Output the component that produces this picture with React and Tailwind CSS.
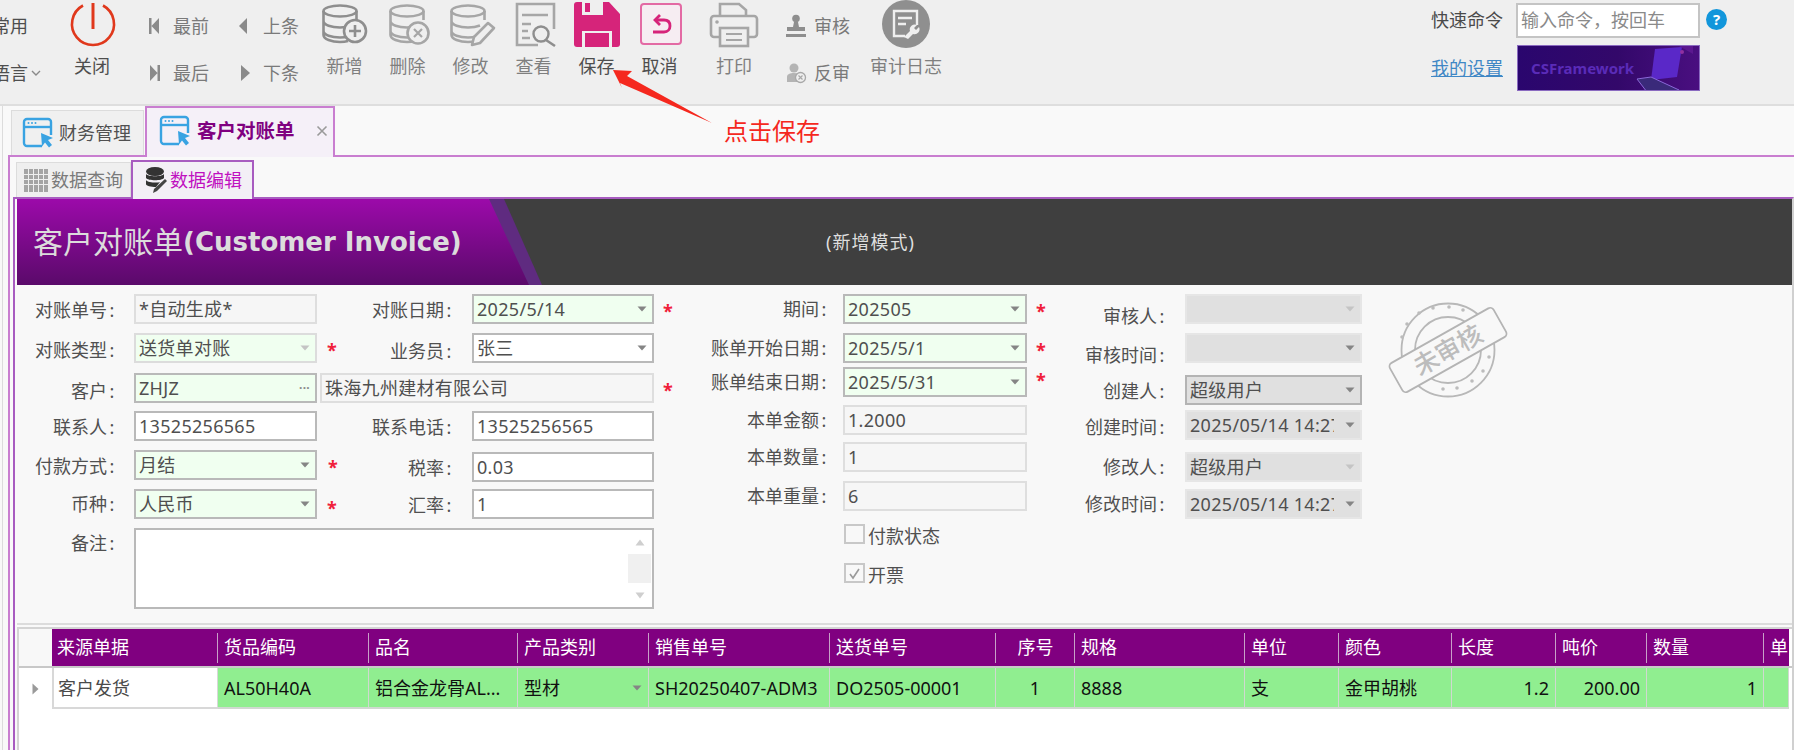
import React from "react";

const GRAY = "#8e8e8e";
const LIGHT = "#a6a6a6";

function Tri({ light }) {
  return (
    <svg width="10" height="6" viewBox="0 0 10 6" className="shrink-0">
      <path d="M0.5 0.5h9L5 5.5z" fill={light ? "#c4c4c4" : "#858585"} />
    </svg>
  );
}

const boxStyles = {
  req: "bg-[#f0fff0] border-[#b9b9b9]",
  reqLight: "bg-[#f0fff0] border-[#dcdcdc]",
  plain: "bg-white border-[#b9b9b9]",
  read: "bg-[#f6f6f6] border-[#dedede]",
  dis: "bg-[#e0e0e0] border-[#e6e6e6]",
  disDark: "bg-[#e0e0e0] border-[#b4b4b4]",
};

function Box({ kind = "plain", w = "w-[183px]", h = "h-[30px]", arrow, light, dots, extra = "", children }) {
  return (
    <div className={`flex items-center gap-[11px] border-2 pl-[3px] pr-[5px] text-[18px] leading-[26px] tracking-[0.3px] text-[#4f4f4f] overflow-hidden whitespace-nowrap shrink-0 ${boxStyles[kind]} ${w} ${h} ${extra}`}>
      <span className="flex-1 overflow-hidden">{children}</span>
      {arrow && <Tri light={light} />}
      {dots && <span className="text-[#8a8a8a] text-[12px] leading-none font-bold">···</span>}
    </div>
  );
}

function Star({ extra = "" }) {
  return <span className={`inline-block w-[9px] text-center text-[#f0203a] text-[18px] leading-none font-bold shrink-0 ${extra}`}>*</span>;
}

function Label({ w, pr = "pr-[19px]", pt = "pt-[2px]", children }) {
  return (
    <div className={`flex items-center justify-end text-right text-[18px] leading-[26px] text-[#505050] h-[30px] shrink-0 whitespace-nowrap ${w} ${pr} ${pt}`}>
      <span>{children}</span>
      <span className="inline-block w-[10px] text-center -mr-[2px]">:</span>
    </div>
  );
}

function ToolBtn({ label, dark, children, w = "w-[63px]" }) {
  return (
    <div className={`flex flex-col items-center shrink-0 ${w}`}>
      <div className="h-[54px]">{children}</div>
      <div className={`text-[18px] leading-[24px] whitespace-nowrap ${dark ? "text-[#4e4e4e]" : "text-[#7f7f7f]"}`}>{label}</div>
    </div>
  );
}

function Db({ c, x }) {
  return (
    <g fill="none" stroke={c} strokeWidth="2.6">
      <ellipse cx={x + 17} cy="11" rx="16.5" ry="5.5" />
      <path d={`M${x + 0.5} 11v24c0 4 8 7 16.5 7 3 0 6-.4 8-1M${x + 33.5} 11v9M${x + 0.5} 21c0 4 8 6.5 16.5 6.5 5 0 9-.8 12-2M${x + 0.5} 31c0 4 8 6.5 16.5 6.5 3 0 6-.3 8-1`} />
    </g>
  );
}

function Tri2({ dir }) {
  return (
    <svg width="12" height="18" viewBox="0 0 12 18" className="shrink-0">
      {dir === "first" && <path d="M1 1h2.5v16H1zM11 1v16L3.5 9z" fill="#8a8a8a" />}
      {dir === "prev" && <path d="M9 1v16L1 9z" fill="#8a8a8a" />}
      {dir === "last" && <path d="M8.5 1h2.5v16H8.5zM1 1v16L8.5 9z" fill="#8a8a8a" />}
      {dir === "next" && <path d="M2 1v16L11 9z" fill="#8a8a8a" />}
    </svg>
  );
}

function NavCell({ dir, w, gap, children }) {
  return (
    <div className={`flex items-center h-[24px] text-[18px] leading-[24px] text-[#7a7a7a] ${w} ${gap}`}>
      <Tri2 dir={dir} />
      <span>{children}</span>
    </div>
  );
}

function WinIcon() {
  return (
    <svg width="32" height="32" viewBox="0 0 32 32" className="shrink-0">
      <g fill="none" stroke="#39a3e2" strokeWidth="2.4">
        <path d="M20 29H5a3 3 0 0 1-3-3V5a3 3 0 0 1 3-3h21a3 3 0 0 1 3 3v13" />
        <path d="M2 10h27" />
      </g>
      <g fill="#39a3e2">
        <circle cx="6.5" cy="6" r="1" />
        <circle cx="10" cy="6" r="1" />
        <circle cx="13.5" cy="6" r="1" />
        <path d="M19 16l12 5-5 2 4 5-3 2.5-4-5-3 4z" />
      </g>
    </svg>
  );
}

const cols = [
  { w: "w-[166px]", h: "来源单据", c: "客户发货", white: true },
  { w: "w-[151px]", h: "货品编码", c: "AL50H40A" },
  { w: "w-[149px]", h: "品名", c: "铝合金龙骨AL..." },
  { w: "w-[131px]", h: "产品类别", c: "型材", arrow: true },
  { w: "w-[181px]", h: "销售单号", c: "SH20250407-ADM3" },
  { w: "w-[166px]", h: "送货单号", c: "DO2505-00001" },
  { w: "w-[79px]", h: "序号", c: "1", center: true },
  { w: "w-[170px]", h: "规格", c: "8888" },
  { w: "w-[94px]", h: "单位", c: "支" },
  { w: "w-[113px]", h: "颜色", c: "金甲胡桃" },
  { w: "w-[104px]", h: "长度", c: "1.2", right: true },
  { w: "w-[91px]", h: "吨价", c: "200.00", right: true },
  { w: "w-[117px]", h: "数量", c: "1", right: true },
  { w: "w-[25px]", h: "单", c: "" },
];

function Check({ checked, label, extra = "" }) {
  return (
    <div className={`flex items-center gap-[3px] h-[20px] text-[18px] text-[#505050] ${extra}`}>
      <span className="w-[21px] h-[20px] border-2 border-[#c8c8c8] bg-[#f8f8f8] flex items-center justify-center">
        {checked && (
          <svg width="13" height="13" viewBox="0 0 13 13">
            <path d="M2 7l3 4 6-9" fill="none" stroke="#9a9a9a" strokeWidth="1.6" />
          </svg>
        )}
      </span>
      <span className="pt-[4px]">{label}</span>
    </div>
  );
}

export default function App() {
  return (
    <div className="relative w-[1794px] h-[750px] overflow-hidden flex flex-col bg-[#f9f9f9] font-['Noto_Sans','Noto_Sans_CJK_SC',sans-serif]">
      {/* Toolbar */}
      <div className="h-[106px] shrink-0 flex bg-[#efefef] border-b-2 border-[#dedede] overflow-hidden">
        <div className="w-[67px] shrink-0 -ml-[8px] mr-[8px] pt-[14px] text-[18px] leading-[24px] text-[#4e4e4e] whitespace-nowrap">
          <div>常用</div>
          <div className="mt-[23px] flex items-center gap-[3px]">
            语言
            <svg width="10" height="7" viewBox="0 0 10 7"><path d="M1 1l4 4 4-4" fill="none" stroke="#8a8a8a" strokeWidth="1.4" /></svg>
          </div>
        </div>
        <ToolBtn label="关闭" dark w="w-[50px]">
          <svg width="50" height="48" viewBox="0 0 50 48">
            <path d="M16 5.500a21 21 0 1 0 20 0" fill="none" stroke="#e0381c" strokeWidth="2.6" />
            <path d="M26 3v26" stroke="#e0381c" strokeWidth="3" />
          </svg>
        </ToolBtn>
        <div className="w-[167px] shrink-0 ml-[29px] pt-[14px] flex flex-wrap content-start gap-y-[23px]">
          <NavCell dir="first" w="w-[90px] pl-[2px]" gap="gap-[13px]">最前</NavCell>
          <NavCell dir="prev" w="w-[77px] pl-[2px]" gap="gap-[13px]">上条</NavCell>
          <NavCell dir="last" w="w-[90px] pl-[3px]" gap="gap-[12px]">最后</NavCell>
          <NavCell dir="next" w="w-[77px] pl-[3px]" gap="gap-[12px]">下条</NavCell>
        </div>
        <ToolBtn label="新增">
          <svg width="63" height="48" viewBox="0 0 63 48">
            <Db c={GRAY} x={10} />
            <circle cx="42" cy="31" r="11" fill="#efefef" stroke={GRAY} strokeWidth="2.6" />
            <path d="M42 25v12M36 31h12" stroke={GRAY} strokeWidth="2.6" />
          </svg>
        </ToolBtn>
        <ToolBtn label="删除">
          <svg width="63" height="48" viewBox="0 0 63 48">
            <Db c={LIGHT} x={14} />
            <circle cx="42" cy="33" r="10.500" fill="#efefef" stroke={LIGHT} strokeWidth="2.6" />
            <path d="M38 29l8 8M46 29l-8 8" stroke={LIGHT} strokeWidth="2.2" />
          </svg>
        </ToolBtn>
        <ToolBtn label="修改">
          <svg width="63" height="48" viewBox="0 0 63 48">
            <Db c={LIGHT} x={12} />
            <path d="M49 23l6 5-14 15-8 2 2-8z" fill="#efefef" stroke={LIGHT} strokeWidth="2.6" strokeLinejoin="round" />
          </svg>
        </ToolBtn>
        <ToolBtn label="查看">
          <svg width="63" height="48" viewBox="0 0 63 48">
            <path d="M36 45H15V4h37v25" fill="none" stroke={LIGHT} strokeWidth="2.6" />
            <path d="M20 15h26M20 24h9M20 31h6M20 38h8" stroke={LIGHT} strokeWidth="2.4" />
            <circle cx="39" cy="34" r="7.500" fill="none" stroke={GRAY} strokeWidth="2.4" />
            <path d="M44 40l9 6" stroke={GRAY} strokeWidth="2.6" />
          </svg>
        </ToolBtn>
        <ToolBtn label="保存" dark>
          <svg width="63" height="48" viewBox="0 0 63 48">
            <path d="M12 2h32l11 12v30a3 3 0 0 1-3 3H12a3 3 0 0 1-3-3V5a3 3 0 0 1 3-3z" fill="#d6247a" />
            <rect x="17" y="2" width="21" height="13" fill="#efefef" />
            <rect x="20" y="3" width="5" height="9" fill="#d6247a" />
            <rect x="17" y="31" width="30" height="16" fill="#efefef" />
            <rect x="20" y="33" width="24" height="14" fill="#d6247a" />
          </svg>
        </ToolBtn>
        <ToolBtn label="取消" dark>
          <svg width="63" height="48" viewBox="0 0 63 48">
            <rect x="13" y="4" width="40" height="40" rx="3" fill="#f6edf2" stroke="#e36aa4" strokeWidth="2" />
            <path d="M32 15l-5 5 5 5" fill="none" stroke="#d6247a" strokeWidth="2.8" />
            <path d="M27 20h9c5 0 6 3 6 6s-2 6-6 6H25" fill="none" stroke="#d6247a" strokeWidth="2.8" />
          </svg>
        </ToolBtn>
        <ToolBtn label="打印" w="w-[86px]">
          <svg width="86" height="48" viewBox="0 0 86 48">
            <path d="M29 15V4h19l7 6v5" fill="none" stroke={LIGHT} strokeWidth="2.6" />
            <path d="M29 37h-6a3 3 0 0 1-3-3V19a3 3 0 0 1 3-3h40a3 3 0 0 1 3 3v15a3 3 0 0 1-3 3h-6" fill="none" stroke={LIGHT} strokeWidth="2.6" />
            <rect x="29" y="28" width="28" height="18" fill="none" stroke={LIGHT} strokeWidth="2.6" />
            <path d="M35 34h16M35 40h16" stroke={LIGHT} strokeWidth="2.2" />
            <circle cx="26" cy="22" r="1.800" fill={LIGHT} />
          </svg>
        </ToolBtn>
        <div className="w-[83px] shrink-0 pl-[8px] pt-[14px] flex flex-col gap-[23px] text-[18px] leading-[24px] text-[#7a7a7a]">
          <div className="flex items-center gap-[7px] h-[24px]">
            <svg width="22" height="24" viewBox="0 0 22 24" className="shrink-0">
              <circle cx="11" cy="4.500" r="3.800" fill="#8e8e8e" />
              <path d="M9 8h4l1 5h6v4H2v-4h6z M1 20h20v3H1z" fill="#8e8e8e" />
            </svg>
            审核
          </div>
          <div className="flex items-center gap-[7px] h-[24px]">
            <svg width="22" height="22" viewBox="0 0 22 22" className="shrink-0">
              <circle cx="9" cy="6" r="4.500" fill="#b4b4b4" />
              <path d="M2 20v-5c0-3 3-4 7-4s6 1 6 3v6z" fill="#b4b4b4" />
              <circle cx="15.500" cy="15.500" r="5" fill="#efefef" stroke="#a8a8a8" strokeWidth="1.300" />
              <path d="M13.500 13.500l4 4M17.500 13.500l-4 4" stroke="#a8a8a8" strokeWidth="1.200" />
            </svg>
            反审
          </div>
        </div>
        <ToolBtn label="审计日志" w="w-[92px]">
          <svg width="92" height="48" viewBox="0 0 92 48">
            <circle cx="46" cy="24" r="24" fill="#8f8f8f" />
            <path d="M45 36H34V11h23v14" fill="none" stroke="#efefef" strokeWidth="2.4" />
            <path d="M38 18h14M38 24h8" stroke="#efefef" strokeWidth="2.4" />
            <path d="M44 37l6-6a5 5 0 0 1 7-6l-3 3 2 2 3-3a5 5 0 0 1-6 7l-5 5z" fill="#efefef" />
          </svg>
        </ToolBtn>
        <div className="ml-[479px] w-[300px] shrink-0 flex flex-col">
          <div className="flex items-center h-[45px] pb-[4px]">
            <span className="w-[85px] text-[18px] text-[#4a4a4a]">快速命令</span>
            <div className="w-[184px] h-[35px] border-2 border-[#c4c4c4] bg-white pl-[3px] text-[18px] leading-[31px] text-[#8a8a8a] whitespace-nowrap">输入命令，按回车</div>
            <span className="ml-[6px] w-[21px] h-[21px] mb-[3px] rounded-full bg-[#1296db] text-white text-[15px] font-bold leading-[21px] text-center">?</span>
          </div>
          <div className="flex items-center">
            <span className="w-[86px] text-[18px] text-[#3f87c5] underline">我的设置</span>
            <div className="relative w-[183px] h-[46px] overflow-hidden flex items-center pl-[13px] bg-[linear-gradient(90deg,#2a066e,#33086a_55%,#4a0f80)] border border-[#8a6ac0] text-[#5a2bb8] text-[15px] font-bold">
              <span className="relative z-10">CSFramework</span>
              <svg width="60" height="46" viewBox="0 0 60 46" className="absolute right-[6px] top-0">
                <path d="M22 3l27-2-5 30-26 3z" fill="#5a28c8" />
                <path d="M4 33l14-2 28 13-4 2H14z" fill="#3a2a7a" stroke="#8a68d8" strokeWidth="1" />
                <path d="M46 0h14v8z" fill="#5c1890" />
                <circle cx="49" cy="6" r="2" fill="#9030a0" />
              </svg>
            </div>
          </div>
        </div>
      </div>

      {/* Tabbed body */}
      <div className="flex-1 min-h-0 ml-[2px] border-l border-[#dcdcdc] flex flex-col">
        <div className="h-[49px] shrink-0 pl-[8px] flex items-end gap-[1px]">
          <div className="w-[133px] h-[45px] border border-[#dcdcdc] border-b-0 bg-[#f0f0f0] flex items-center pl-[10px] gap-[5px] text-[18px] text-[#505050]">
            <WinIcon />
            <span className="whitespace-nowrap">财务管理</span>
          </div>
          <div className="relative z-10 -mb-[2px] w-[190px] h-[51px] border-2 border-b-0 border-[#c97ed0] bg-[#f5f0f8] flex items-center pl-[12px] pb-[4px] gap-[6px]">
            <WinIcon />
            <span className="text-[19.5px] font-bold text-[#800080] whitespace-nowrap">客户对账单</span>
            <svg width="12" height="12" viewBox="0 0 12 12" className="ml-[15px]"><path d="M1.500 1.500l9 9M10.500 1.500l-9 9" stroke="#9a9a9a" strokeWidth="1.600" /></svg>
          </div>
        </div>

        <div className="ml-[5px] flex-1 min-h-0 border-t-2 border-l-2 border-[#c97ed0] flex flex-col">
          <div className="h-[40px] shrink-0 pl-[6px] flex items-end">
            <div className="w-[115px] h-[35px] border border-[#dcdcdc] border-b-0 bg-[#efefef] flex items-center pl-[7px] gap-[3px] text-[18px] text-[#7a7a7a] whitespace-nowrap">
              <svg width="24" height="23" viewBox="0 0 24 23" className="shrink-0">
                <rect width="24" height="23" fill="#a4a4a4" />
                <path d="M4.500 0v23M9.500 0v23M14.500 0v23M19.500 0v23M0 5.500h24M0 10.500h24M0 15.500h24" stroke="#efefef" strokeWidth="1" />
              </svg>
              数据查询
            </div>
            <div className="relative z-10 -mb-[2px] w-[123px] h-[39px] border-2 border-b-0 border-[#a85cc0] bg-[#f3eff6] flex items-center pl-[12px] gap-[3px] text-[18px] text-[#c010c0] whitespace-nowrap">
              <svg width="22" height="27" viewBox="0 0 22 27" className="shrink-0">
                <ellipse cx="10" cy="4.500" rx="9" ry="4.500" fill="#333" />
                <path d="M1 7c2 3 16 3 18 0v4c-2 3-16 3-18 0zM1 13c2 3 12 3 14 2l-4 5c-5 0-10-1-10-3z" fill="#333" />
                <path d="M20 12l2 2-10 10-4 2 1-4z" fill="#444" />
              </svg>
              数据编辑
            </div>
          </div>

          <div className="ml-[3px] flex-1 min-h-0 border-t-2 border-l-2 border-r-2 border-t-[#a85cc0] border-l-[#a85cc0] border-r-[#d0d0d0] pl-[2px] flex flex-col">
            {/* Banner */}
            <div className="relative h-[86px] shrink-0 bg-[#3f3f3f] flex items-center overflow-hidden">
              <div className="absolute inset-y-0 left-0 w-[525px] bg-[#5f2b80] [clip-path:polygon(0_0,487px_0,525px_100%,0_100%)]"></div>
              <div className="absolute inset-y-0 left-0 w-[512px] bg-[linear-gradient(180deg,#9c0aaa,#5a0a6a)] [clip-path:polygon(0_0,472px_0,512px_100%,0_100%)]"></div>
              <div className="relative w-[809px] shrink-0 pl-[16px] text-[#dcdcdc] whitespace-nowrap flex items-center">
                <span className="text-[30px] leading-[40px]">客户对账单</span>
                <span className="text-[26px] leading-[40px] font-bold font-['DejaVu_Sans',sans-serif]">(Customer Invoice)</span>
              </div>
              <span className="relative text-[18px] tracking-[1px] text-[#dedede] whitespace-nowrap">(新增模式)</span>
            </div>

            {/* Form */}
            <div className="relative h-[340px] shrink-0 bg-[#f8f8f8] border-b-2 border-[#dcdcdc] pt-[9px] flex items-start">
              <div className="w-[673px] shrink-0 flex flex-col">
                <div className="flex items-start">
                  <Label w="w-[117px]">对账单号</Label>
                  <Box kind="read">*自动生成*</Box>
                  <Label w="w-[155px]" pr="pr-[20px]">对账日期</Label>
                  <Box kind="req" w="w-[182px]" arrow>2025/5/14</Box>
                  <Star extra="ml-[9px] mt-[8px]" />
                </div>
                <div className="flex items-start mt-[9px]">
                  <Label w="w-[117px]" pt="pt-[4px]">对账类型</Label>
                  <Box kind="reqLight" arrow light>送货单对账</Box>
                  <Star extra="ml-[10px] mt-[8px]" />
                  <Label w="w-[136px]" pr="pr-[20px]" pt="pt-[6px]">业务员</Label>
                  <Box w="w-[182px]" arrow>张三</Box>
                </div>
                <div className="flex items-start mt-[10px]">
                  <Label w="w-[117px]" pt="pt-[5px]">客户</Label>
                  <Box kind="req" dots>ZHJZ</Box>
                  <Box kind="read" w="w-[334px]" extra="ml-[3px] bg-[#f0f0f0]">珠海九州建材有限公司</Box>
                  <Star extra="ml-[9px] mt-[8px]" />
                </div>
                <div className="flex items-start mt-[8px]">
                  <Label w="w-[117px]">联系人</Label>
                  <Box>13525256565</Box>
                  <Label w="w-[155px]" pr="pr-[20px]">联系电话</Label>
                  <Box w="w-[182px]">13525256565</Box>
                </div>
                <div className="flex items-start mt-[9px]">
                  <Label w="w-[117px]">付款方式</Label>
                  <Box kind="req" arrow>月结</Box>
                  <Star extra="ml-[11px] mt-[8px]" />
                  <div className="mt-[2px] flex items-start">
                    <Label w="w-[135px]" pr="pr-[20px]">税率</Label>
                    <Box w="w-[182px]">0.03</Box>
                  </div>
                </div>
                <div className="flex items-start mt-[7px]">
                  <Label w="w-[117px]" pt="pt-0">币种</Label>
                  <Box kind="req" arrow>人民币</Box>
                  <Star extra="ml-[10px] mt-[10px]" />
                  <Label w="w-[136px]" pr="pr-[20px]">汇率</Label>
                  <Box w="w-[182px]">1</Box>
                </div>
                <div className="flex items-start mt-[9px]">
                  <Label w="w-[117px]" pt="pt-0">备注</Label>
                  <div className="relative w-[520px] h-[81px] border-2 border-[#b9b9b9] bg-white flex justify-end">
                    <div className="w-[23px] h-full bg-[#f0f0f0] flex flex-col justify-between mr-[1px]">
                      <div className="h-[24px] bg-white flex items-center justify-center">
                        <svg width="10" height="7" viewBox="0 0 10 7"><path d="M5 .5l4.500 6h-9z" fill="#cfcfcf" /></svg>
                      </div>
                      <div className="h-[24px] bg-white flex items-center justify-center">
                        <svg width="10" height="7" viewBox="0 0 10 7"><path d="M5 6.500l4.500-6h-9z" fill="#cfcfcf" /></svg>
                      </div>
                    </div>
                  </div>
                </div>
              </div>

              <div className="w-[380px] shrink-0 flex flex-col">
                <div className="flex items-start">
                  <Label w="w-[153px]" pr="pr-[16px]" pt="pt-0">期间</Label>
                  <Box kind="req" w="w-[184px]" arrow>202505</Box>
                  <Star extra="ml-[9px] mt-[8px]" />
                </div>
                <div className="flex items-start mt-[9px]">
                  <Label w="w-[153px]" pr="pr-[16px]" pt="pt-0">账单开始日期</Label>
                  <Box kind="req" w="w-[184px]" arrow>2025/5/1</Box>
                  <Star extra="ml-[9px] mt-[8px]" />
                </div>
                <div className="flex items-start mt-[4px]">
                  <Label w="w-[153px]" pr="pr-[16px]" pt="pt-0">账单结束日期</Label>
                  <Box kind="req" w="w-[184px]" arrow>2025/5/31</Box>
                  <Star extra="ml-[9px] mt-[4px]" />
                </div>
                <div className="flex items-start mt-[8px]">
                  <Label w="w-[153px]" pr="pr-[16px]" pt="pt-0">本单金额</Label>
                  <Box kind="read" w="w-[184px]">1.2000</Box>
                </div>
                <div className="flex items-start mt-[7px]">
                  <Label w="w-[153px]" pr="pr-[16px]" pt="pt-0">本单数量</Label>
                  <Box kind="read" w="w-[184px]">1</Box>
                </div>
                <div className="flex items-start mt-[9px]">
                  <Label w="w-[153px]" pr="pr-[16px]" pt="pt-0">本单重量</Label>
                  <Box kind="read" w="w-[184px]">6</Box>
                </div>
                <Check label="付款状态" extra="ml-[154px] mt-[13px]" />
                <Check checked label="开票" extra="ml-[154px] mt-[19px]" />
              </div>

              <div className="flex-1 flex flex-col">
                <div className="flex items-start">
                  <Label w="w-[115px]" pr="pr-[20px]" pt="pt-[13px]">审核人</Label>
                  <Box kind="dis" w="w-[177px]" arrow light></Box>
                </div>
                <div className="flex items-start mt-[9px]">
                  <Label w="w-[115px]" pr="pr-[20px]" pt="pt-[13px]">审核时间</Label>
                  <Box kind="dis" w="w-[177px]" arrow></Box>
                </div>
                <div className="flex items-start mt-[12px]">
                  <Label w="w-[115px]" pr="pr-[20px]">创建人</Label>
                  <Box kind="disDark" w="w-[177px]" arrow>超级用户</Box>
                </div>
                <div className="flex items-start mt-[5px]">
                  <Label w="w-[115px]" pr="pr-[20px]" pt="pt-[4px]">创建时间</Label>
                  <Box kind="dis" w="w-[177px]" arrow>2025/05/14 14:27</Box>
                </div>
                <div className="flex items-start mt-[12px]">
                  <Label w="w-[115px]" pr="pr-[20px]" pt="pt-0">修改人</Label>
                  <Box kind="dis" w="w-[177px]" arrow light>超级用户</Box>
                </div>
                <div className="flex items-start mt-[7px]">
                  <Label w="w-[115px]" pr="pr-[20px]" pt="pt-0">修改时间</Label>
                  <Box kind="dis" w="w-[177px]" arrow>2025/05/14 14:27</Box>
                </div>
              </div>

              {/* Stamp */}
              <svg width="130" height="100" viewBox="0 0 130 100" className="absolute left-[1366px] top-[15px]">
                <g fill="none" stroke="#b8b8b8">
                  <circle cx="65" cy="50" r="46.500" strokeWidth="1.800" />
                  <circle cx="65" cy="50" r="33" strokeWidth="1.800" />
                </g>
                <g fill="#bcbcbc">
                  <circle cx="36" cy="13" r="1.800" /><circle cx="50" cy="8" r="1.800" /><circle cx="66" cy="7" r="1.800" /><circle cx="80" cy="10" r="1.800" /><circle cx="24" cy="24" r="1.800" /><circle cx="19" cy="37" r="1.800" />
                  <circle cx="106" cy="57" r="1.800" /><circle cx="100" cy="71" r="1.800" /><circle cx="89" cy="81" r="1.800" /><circle cx="74" cy="88" r="1.800" /><circle cx="60" cy="89" r="1.800" />
                </g>
                <g transform="rotate(-29.400 65 50)">
                  <rect x="5.500" y="33.500" width="119" height="33" rx="4" fill="#f8f8f8" stroke="#b4b4b4" strokeWidth="1.800" />
                  <text x="65" y="59" textAnchor="middle" fontSize="25" fill="#bcbcbc" fontWeight="500" fontFamily="Noto Sans CJK SC">未审核</text>
                </g>
              </svg>
            </div>

            {/* Grid */}
            <div className="flex-1 min-h-0 mt-[2px] bg-white border-l-2 border-t-2 border-[#d4d4d4] ml-0 flex flex-col">
              <div className="h-[37px] shrink-0 flex border-b-2 border-[#c8c8c8] box-content">
                <div className="w-[33px] shrink-0 bg-[#f8f8f8]"></div>
                {cols.map((c, i) => (
                  <div key={i} className={`${c.w} shrink-0 bg-[#800080] text-white text-[18px] leading-[36px] overflow-hidden whitespace-nowrap relative ${c.white ? "pl-[5px]" : "pl-[6px]"} ${c.center ? "text-center pr-[6px]" : ""}`}>
                    {c.h}
                    {i < cols.length - 1 && <span className="absolute right-0 top-[4px] bottom-[3px] w-px bg-[#c8a0c8]"></span>}
                  </div>
                ))}
              </div>
              <div className="h-[41px] shrink-0 flex">
                <div className="w-[33px] shrink-0 flex items-center pl-[13px]">
                  <svg width="7" height="12" viewBox="0 0 7 12"><path d="M.5.5l6 5.500-6 5.500z" fill="#9a9a9a" /></svg>
                </div>
                {cols.map((c, i) => (
                  <div key={i} className={`${c.w} shrink-0 ${c.white ? "bg-white text-[#4a4a4a] border-l-2 border-[#d8d8d8] pl-[4px] pr-[6px]" : "bg-[#90ee90] text-[#111] px-[6px]"} border-b-2 border-r border-[#d0d8d0] text-[18px] leading-[40px] whitespace-nowrap overflow-hidden flex items-center ${c.center ? "justify-center" : ""} ${c.right ? "justify-end" : ""} ${c.arrow ? "justify-between" : ""}`}>
                    <span>{c.c}</span>
                    {c.arrow && <Tri />}
                  </div>
                ))}
              </div>
            </div>
          </div>
        </div>
      </div>

      {/* Annotation */}
      <svg width="1794" height="750" viewBox="0 0 1794 750" className="absolute inset-0 pointer-events-none z-20">
        <path d="M613 70l19 1-5 5 85 47-92-40 2 5z" fill="#f5281e" />
      </svg>
      <span className="absolute left-[724px] top-[114px] z-20 text-[24px] leading-[34px] text-[#f5281e] whitespace-nowrap">点击保存</span>
    </div>
  );
}
